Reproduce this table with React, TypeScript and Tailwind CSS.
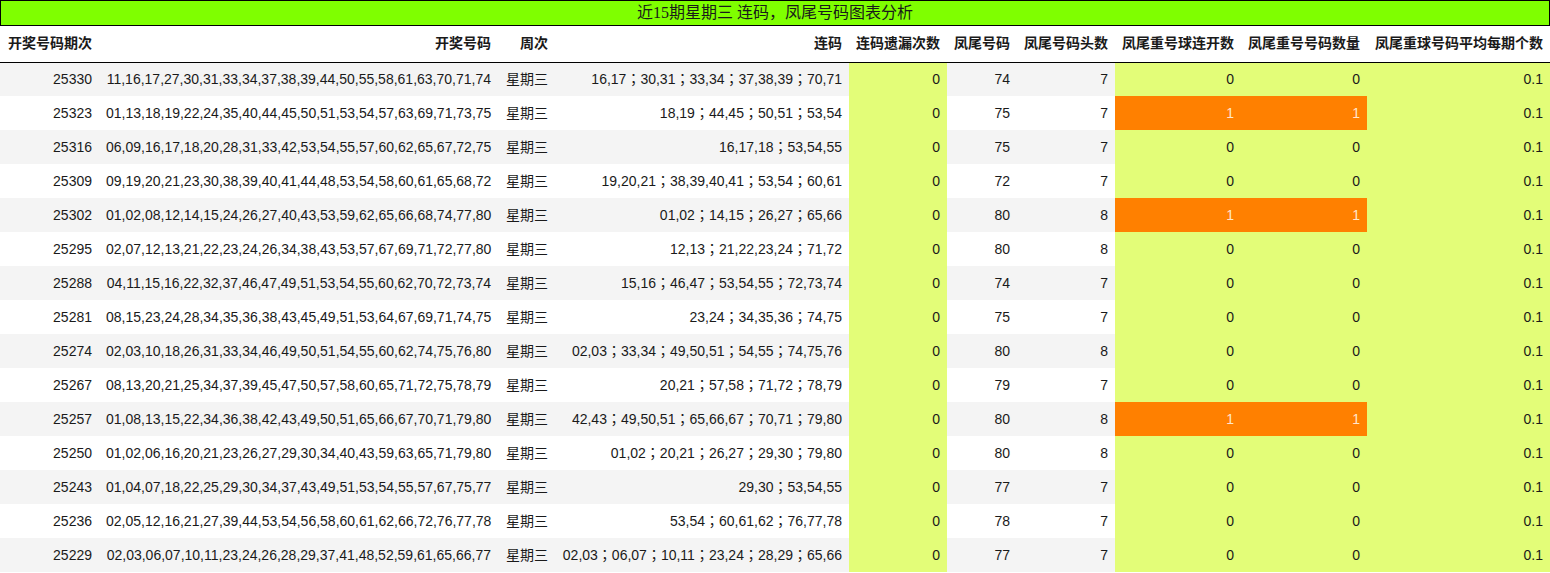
const rows: [string, string, string, number, string, number, number, number, string][] = [
  ['25330', '11,16,17,27,30,31,33,34,37,38,39,44,50,55,58,61,63,70,71,74', '16,17；30,31；33,34；37,38,39；70,71', 0, '74', 7, 0, 0, '0.1'],
  ['25323', '01,13,18,19,22,24,35,40,44,45,50,51,53,54,57,63,69,71,73,75', '18,19；44,45；50,51；53,54', 0, '75', 7, 1, 1, '0.1'],
  ['25316', '06,09,16,17,18,20,28,31,33,42,53,54,55,57,60,62,65,67,72,75', '16,17,18；53,54,55', 0, '75', 7, 0, 0, '0.1'],
  ['25309', '09,19,20,21,23,30,38,39,40,41,44,48,53,54,58,60,61,65,68,72', '19,20,21；38,39,40,41；53,54；60,61', 0, '72', 7, 0, 0, '0.1'],
  ['25302', '01,02,08,12,14,15,24,26,27,40,43,53,59,62,65,66,68,74,77,80', '01,02；14,15；26,27；65,66', 0, '80', 8, 1, 1, '0.1'],
  ['25295', '02,07,12,13,21,22,23,24,26,34,38,43,53,57,67,69,71,72,77,80', '12,13；21,22,23,24；71,72', 0, '80', 8, 0, 0, '0.1'],
  ['25288', '04,11,15,16,22,32,37,46,47,49,51,53,54,55,60,62,70,72,73,74', '15,16；46,47；53,54,55；72,73,74', 0, '74', 7, 0, 0, '0.1'],
  ['25281', '08,15,23,24,28,34,35,36,38,43,45,49,51,53,64,67,69,71,74,75', '23,24；34,35,36；74,75', 0, '75', 7, 0, 0, '0.1'],
  ['25274', '02,03,10,18,26,31,33,34,46,49,50,51,54,55,60,62,74,75,76,80', '02,03；33,34；49,50,51；54,55；74,75,76', 0, '80', 8, 0, 0, '0.1'],
  ['25267', '08,13,20,21,25,34,37,39,45,47,50,57,58,60,65,71,72,75,78,79', '20,21；57,58；71,72；78,79', 0, '79', 7, 0, 0, '0.1'],
  ['25257', '01,08,13,15,22,34,36,38,42,43,49,50,51,65,66,67,70,71,79,80', '42,43；49,50,51；65,66,67；70,71；79,80', 0, '80', 8, 1, 1, '0.1'],
  ['25250', '01,02,06,16,20,21,23,26,27,29,30,34,40,43,59,63,65,71,79,80', '01,02；20,21；26,27；29,30；79,80', 0, '80', 8, 0, 0, '0.1'],
  ['25243', '01,04,07,18,22,25,29,30,34,37,43,49,51,53,54,55,57,67,75,77', '29,30；53,54,55', 0, '77', 7, 0, 0, '0.1'],
  ['25236', '02,05,12,16,21,27,39,44,53,54,56,58,60,61,62,66,72,76,77,78', '53,54；60,61,62；76,77,78', 0, '78', 7, 0, 0, '0.1'],
  ['25229', '02,03,06,07,10,11,23,24,26,28,29,37,41,48,52,59,61,65,66,77', '02,03；06,07；10,11；23,24；28,29；65,66', 0, '77', 7, 0, 0, '0.1'],
];

const headers = [
  '开奖号码期次', '开奖号码', '周次', '连码', '连码遗漏次数', '凤尾号码',
  '凤尾号码头数', '凤尾重号球连开数', '凤尾重号号码数量', '凤尾重球号码平均每期个数',
];
const widths = [99, 399, 57, 294, 98, 70, 98, 126, 126, 183];

export default function App() {
  return (
    <div className="w-[1550px] bg-white text-[#1a1a1a] font-['Liberation_Sans','Noto_Sans_CJK_SC',sans-serif]">
      <div className="h-[26px] border border-black bg-[#7fff00] flex items-center justify-center text-[16px] leading-none font-['Liberation_Serif','Noto_Sans_CJK_SC',serif]">
        近15期星期三 连码，凤尾号码图表分析
      </div>
      <table className="w-[1550px] table-fixed border-collapse text-[14px]">
        <colgroup>
          {widths.map((w, i) => (
            <col key={i} style={{ width: w }} />
          ))}
        </colgroup>
        <thead>
          <tr className="h-[36px] border-b border-black">
            {headers.map((h, i) => (
              <th key={i} className="px-[7px] font-bold whitespace-nowrap text-right">
                {h}
              </th>
            ))}
          </tr>
        </thead>
        <tbody>
          {rows.map((r, idx) => {
            const hit = r[6] === 1;
            return (
              <tr key={r[0]} className={`h-[34px] ${idx % 2 === 0 ? 'bg-[#f4f4f4]' : 'bg-white'}`}>
                <td className="px-[7px] text-right">{r[0]}</td>
                <td className="px-[7px] text-right whitespace-nowrap">{r[1]}</td>
                <td className="pl-[8px] text-left whitespace-nowrap">星期三</td>
                <td className="px-[7px] text-right whitespace-nowrap font-['Liberation_Sans','Noto_Sans_CJK_TC',sans-serif]">{r[2]}</td>
                <td className="px-[7px] text-right bg-[#e3fd78]">{r[3]}</td>
                <td className="px-[7px] text-right">{r[4]}</td>
                <td className="px-[7px] text-right">{r[5]}</td>
                <td className={`px-[7px] text-right ${hit ? 'bg-[#ff8000] text-[#ffe6cc]' : 'bg-[#e3fd78]'}`}>{r[6]}</td>
                <td className={`px-[7px] text-right ${hit ? 'bg-[#ff8000] text-[#ffe6cc]' : 'bg-[#e3fd78]'}`}>{r[7]}</td>
                <td className="px-[7px] text-right bg-[#e3fd78]">{r[8]}</td>
              </tr>
            );
          })}
        </tbody>
      </table>
    </div>
  );
}
